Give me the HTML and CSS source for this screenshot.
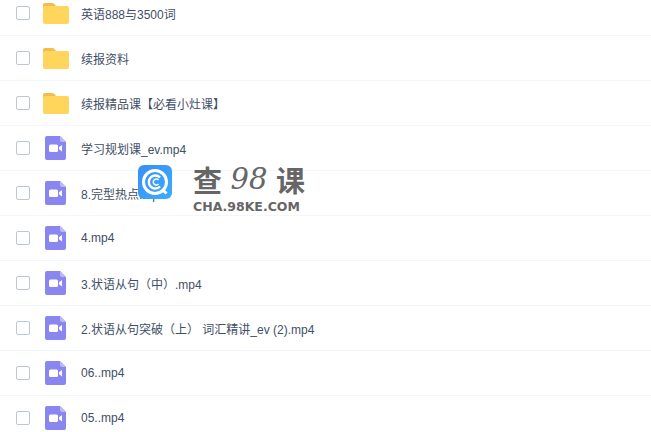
FILE: index.html
```html
<!DOCTYPE html>
<html lang="zh-CN">
<head>
    <meta charset="UTF-8">
    <meta name="viewport" content="width=device-width, initial-scale=1.0">
    <title>文件列表</title>
    <link rel="stylesheet" href="styles.css">
</head>
<body>
    <svg class="icon-defs" width="0" height="0">
        <symbol id="folder" viewBox="0 0 26 21">
            <path d="M0 2a2 2 0 0 1 2-2h7.5a2 2 0 0 1 1.6.8L13 3v3H0z" fill="#f0bd4e"/>
            <path d="M0 5a2 2 0 0 1 2-2h22a2 2 0 0 1 2 2v14a2 2 0 0 1-2 2H2a2 2 0 0 1-2-2z" fill="#ffd55c"/>
        </symbol>
        <symbol id="video" viewBox="0 0 21 24">
            <path d="M2 0h13l6 6v16a2 2 0 0 1-2 2H2a2 2 0 0 1-2-2V2a2 2 0 0 1 2-2z" fill="#8a86ef"/>
            <path d="M15 0l6 6h-4a2 2 0 0 1-2-2z" fill="#bcb9f7"/>
            <rect x="4" y="8.5" width="9" height="7.5" rx="1.5" fill="#fff"/>
            <path d="M14 11.2l3-2.2v6.500l-3-2.200z" fill="#fff"/>
        </symbol>
    </svg>

    <ul class="file-list">
        <li class="file-row"><span class="check"></span><svg class="icon-folder"><use href="#folder"/></svg><span class="name">英语888与3500词</span></li>
        <li class="file-row"><span class="check"></span><svg class="icon-folder"><use href="#folder"/></svg><span class="name">续报资料</span></li>
        <li class="file-row"><span class="check"></span><svg class="icon-folder"><use href="#folder"/></svg><span class="name">续报精品课【必看小灶课】</span></li>
        <li class="file-row"><span class="check"></span><svg class="icon-video"><use href="#video"/></svg><span class="name">学习规划课_ev.mp4</span></li>
        <li class="file-row"><span class="check"></span><svg class="icon-video"><use href="#video"/></svg><span class="name">8.完型热点.mp4</span></li>
        <li class="file-row"><span class="check"></span><svg class="icon-video"><use href="#video"/></svg><span class="name">4.mp4</span></li>
        <li class="file-row"><span class="check"></span><svg class="icon-video"><use href="#video"/></svg><span class="name">3.状语从句（中）.mp4</span></li>
        <li class="file-row"><span class="check"></span><svg class="icon-video"><use href="#video"/></svg><span class="name">2.状语从句突破（上） 词汇精讲_ev (2).mp4</span></li>
        <li class="file-row"><span class="check"></span><svg class="icon-video"><use href="#video"/></svg><span class="name">06..mp4</span></li>
        <li class="file-row"><span class="check"></span><svg class="icon-video"><use href="#video"/></svg><span class="name">05..mp4</span></li>
    </ul>

    <!-- 水印 -->
    <div class="watermark">
        <svg class="wm-logo" viewBox="0 0 34 34">
            <defs>
                <linearGradient id="wmBlue" x1="0" y1="0" x2="1" y2="1">
                    <stop offset="0" stop-color="#3b8cf8"/>
                    <stop offset="1" stop-color="#39aefb"/>
                </linearGradient>
            </defs>
            <rect width="34" height="34" rx="6" fill="url(#wmBlue)"/>
            <circle cx="17" cy="17" r="11.500" fill="none" stroke="#fff" stroke-width="3"/>
            <path d="M22 12.500a6.500 6.500 0 1 0 0 9" fill="none" stroke="#fff" stroke-width="2.400"/>
            <path d="M20.500 15a3 3 0 1 0 0 4" fill="none" stroke="#fff" stroke-width="1.500"/>
            <path d="M25 25l3.500 3.500" stroke="#fff" stroke-width="3"/>
        </svg>
        <div class="wm-text">
            <div class="wm-title"><span>查</span><span class="wm-num">98</span><span>课</span></div>
            <div class="wm-url">CHA.98KE.COM</div>
        </div>
    </div>
</body>
</html>
```

FILE: styles.css
```css
html, body {
    height: 100%;
    overflow: hidden;
}
body {
    margin: 0;
    background-color: #fff;
    font-family: "Liberation Sans", "Noto Sans CJK SC", sans-serif;
    font-size: 12px;
    color: #424e67;
}
.icon-defs {
    display: block;
    height: 0;
}
.file-list {
    list-style: none;
    margin: -9px 0 0;
    padding: 0;
}
.file-row {
    display: flex;
    align-items: center;
    height: 44px;
    padding-left: 16px;
    border-bottom: 1px solid #f2f6fd;
}
.check {
    box-sizing: border-box;
    width: 14px;
    height: 14px;
    border: 1px solid #bcc6d8;
    border-radius: 2px;
    margin-right: 13px;
}
.icon-folder {
    width: 26px;
    height: 21px;
    margin-right: 12px;
}
.icon-video {
    width: 21px;
    height: 24px;
    margin-left: 2px;
    margin-right: 15px;
}
.watermark {
    position: absolute;
    left: 138px;
    top: 163px;
    display: flex;
    gap: 21px;
}
.wm-logo {
    width: 34px;
    height: 34px;
    margin-top: 2px;
}
.wm-title {
    display: flex;
    justify-content: space-between;
    width: 112px;
    font-family: "Noto Sans CJK SC", sans-serif;
    font-size: 29px;
    font-weight: 700;
    line-height: 32px;
    color: #666;
}
.wm-num {
    font-family: "DejaVu Serif", serif;
    font-style: italic;
    font-weight: 400;
}
.wm-url {
    margin-top: 5px;
    font-family: "DejaVu Sans", sans-serif;
    font-size: 12.500px;
    font-weight: 700;
    line-height: 14px;
    color: #666;
    white-space: nowrap;
}
```
